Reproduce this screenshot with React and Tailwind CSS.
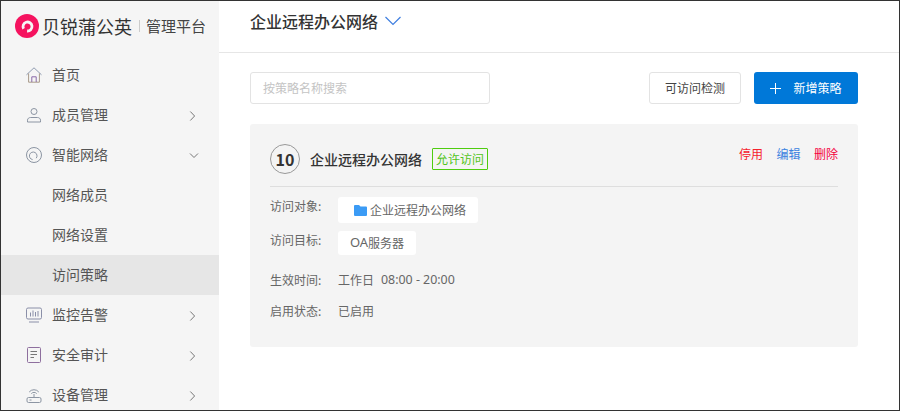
import React from "react";

const Chevron = ({ down }) => (
  <svg width="12" height="12" viewBox="0 0 12 12" fill="none" stroke="#777" strokeWidth="1" className="shrink-0 overflow-visible">
    {down ? <path d="M4 4.5 L8 8.5 L12 4.5" /> : <path d="M4.3 2.5 L8.6 7 L4.3 11.5" />}
  </svg>
);

const icons = {
  home: (
    <svg width="16" height="16" viewBox="0 0 16 16" fill="none" strokeWidth="1">
      <path d="M0.5 7.8 L8 0.8 L15.5 7.8" stroke="#8f9bb0" />
      <path d="M2.6 6.4 V15.2 H13.4 V6.4" stroke="#a89a8a" />
      <path d="M5.8 15 V9.8 H10.2 V15" stroke="#8b6aa8" />
    </svg>
  ),
  user: (
    <svg width="16" height="16" viewBox="0 0 16 16" fill="none" stroke="#8c95a3" strokeWidth="1">
      <circle cx="8" cy="4.5" r="3" />
      <path d="M1.5 15 V13.2 C1.5 11.5 3 10.5 4.6 10.5 H11.4 C13 10.5 14.5 11.5 14.5 13.2 V15 Z" />
    </svg>
  ),
  net: (
    <svg width="16" height="16" viewBox="0 0 16 16" fill="none" stroke="#8c95a3" strokeWidth="1">
      <circle cx="8" cy="8" r="7.5" />
      <path d="M6.6 12.6 A3.8 3.8 0 1 1 10.2 11.2" />
      <circle cx="8" cy="8.8" r="2" stroke="none" />
    </svg>
  ),
  monitor: (
    <svg width="16" height="16" viewBox="0 0 16 16" fill="none" stroke="#8a8fa8" strokeWidth="1">
      <rect x="0.5" y="1" width="15" height="11" rx="1.5" />
      <path d="M3 15 H13" />
      <path d="M4.5 5.5 V9.5 M7 3.5 V9.5 M9.5 5 V9.5 M12 4 V9.5" />
    </svg>
  ),
  audit: (
    <svg width="16" height="16" viewBox="0 0 16 16" fill="none" stroke="#8e6f9e" strokeWidth="1">
      <rect x="1.5" y="0.5" width="13" height="15" rx="1" />
      <path d="M4.5 4.5 H11 M4.5 7.5 H11 M4.5 10.5 H8" stroke="#777" />
    </svg>
  ),
  device: (
    <svg width="16" height="16" viewBox="0 0 16 16" fill="none" stroke="#8c95a3" strokeWidth="1">
      <path d="M3.2 5 A6.2 6.2 0 0 1 12.8 5" />
      <path d="M5.3 6.6 A3.6 3.6 0 0 1 10.7 6.6" />
      <path d="M8 7 V10.5" />
      <rect x="1" y="10.5" width="14" height="5" rx="1.5" />
      <path d="M3.5 13 H5.5" />
    </svg>
  ),
};

const MenuItem = ({ icon, label, chevron, down, active, sub }) => (
  <div className={`flex h-10 shrink-0 items-center pr-[21px] ${active ? "bg-[#e6e6e6]" : ""} ${sub ? "pl-[51px]" : "pl-[25px]"}`}>
    {icon && <span className="mr-[10px] flex h-4 w-4 shrink-0 items-center justify-center">{icons[icon]}</span>}
    <span className="flex-1 pb-[2px] text-[14px] leading-5 text-[#555]">{label}</span>
    {chevron && <Chevron down={down} />}
  </div>
);

const Row = ({ label, children, className, labelClass }) => (
  <div className={`flex ${className}`}>
    <span className={`w-[68px] shrink-0 text-[12px] leading-5 text-[#666] ${labelClass || ""}`}>{label}</span>
    {children}
  </div>
);

export default function App() {
  return (
    <div
      className="flex h-[411px] w-[900px] overflow-hidden border border-[#333] bg-white"
      style={{ fontFamily: '"Noto Sans CJK SC", "Noto Sans", sans-serif' }}
    >
      <aside className="flex w-[218px] shrink-0 flex-col overflow-hidden bg-[#f5f5f5]">
        <div className="flex h-[54px] shrink-0 items-center pb-[5px] pl-[14px]">
          <svg width="24" height="24" viewBox="0 0 24 24" className="mr-[3px] shrink-0">
            <circle cx="12" cy="12" r="12" fill="#f5135f" />
            <path d="M8.6 14.75 A4.5 4.5 0 1 1 12.1 17" fill="none" stroke="#f5f5f5" strokeWidth="2.8" />
          </svg>
          <span className="text-[18px] leading-6 text-[#333]">贝锐蒲公英</span>
          <span className="ml-[7px] mr-[6px] h-[12px] w-px bg-[#ccc]" />
          <span className="text-[15px] leading-6 text-[#444]">管理平台</span>
        </div>
        <MenuItem icon="home" label="首页" />
        <MenuItem icon="user" label="成员管理" chevron />
        <MenuItem icon="net" label="智能网络" chevron down />
        <MenuItem sub label="网络成员" />
        <MenuItem sub label="网络设置" />
        <MenuItem sub active label="访问策略" />
        <MenuItem icon="monitor" label="监控告警" chevron />
        <MenuItem icon="audit" label="安全审计" chevron />
        <MenuItem icon="device" label="设备管理" chevron />
      </aside>

      <main className="flex min-w-0 flex-1 flex-col">
        <header className="flex h-[52px] shrink-0 items-center border-b border-[#e6e6e6] pb-[12px] pl-[31px]">
          <span className="text-[16px] font-medium leading-6 text-[#333]">企业远程办公网络</span>
          <svg width="16" height="10" viewBox="0 0 16 10" fill="none" stroke="#3f7fe0" strokeWidth="1.2" className="ml-[7px]">
            <path d="M0.5 1 L8 8.5 L15.5 1" />
          </svg>
        </header>

        <div className="flex flex-col pl-[31px] pr-[41px] pt-[19px]">
          <div className="flex items-center">
            <div className="flex h-8 w-[240px] items-center rounded-[3px] border border-[#e3e3e3] px-3 text-[12px] text-[#c4c4c4]">
              按策略名称搜索
            </div>
            <div className="flex-1" />
            <button className="h-8 w-[92px] rounded-[3px] border border-[#e3e3e3] bg-white text-[12px] text-[#444]">
              可访问检测
            </button>
            <button className="ml-[13px] flex h-8 w-[104px] items-center justify-center rounded-[3px] bg-[#0078d8] text-[12px] text-white">
              <svg width="11" height="11" viewBox="0 0 11 11" stroke="#fff" strokeWidth="1" className="mr-[12px]">
                <path d="M5.5 0 V11 M0 5.5 H11" />
              </svg>
              新增策略
            </button>
          </div>

          <section className="mt-5 h-[223px] rounded-[3px] bg-[#f4f4f4] px-5 pt-5">
            <div className="flex h-[43px] items-start border-b border-[#dedede]">
              <span className="flex h-[30px] w-[30px] items-center justify-center rounded-full border border-[#999] text-[16px] font-bold text-[#333]">
                10
              </span>
              <span className="ml-[10px] mt-[5px] text-[14px] font-medium leading-5 text-[#333]">企业远程办公网络</span>
              <span className="ml-[10px] mt-1 flex h-[22px] items-center rounded-[1px] border border-[#4fcc0f] px-[3px] text-[12px] text-[#52c41a]">
                允许访问
              </span>
              <div className="flex-1" />
              <div className="flex gap-[13.5px] text-[12px] leading-5">
                <span className="text-[#f5222d]">停用</span>
                <span className="text-[#3b82e0]">编辑</span>
                <span className="text-[#f5003c]">删除</span>
              </div>
            </div>

            <Row label="访问对象:" labelClass="-mt-px" className="mt-[10px]">
              <span className="flex h-[26px] items-center rounded-[3px] bg-white pl-4 pr-3 text-[12px] text-[#666]">
                <svg width="13" height="11" viewBox="0 0 13 11" fill="#3b9bf5" className="mr-[3px]">
                  <path d="M0 1 Q0 0 1 0 H5 L6.5 1.5 H12 Q13 1.5 13 2.5 V10 Q13 11 12 11 H1 Q0 11 0 10 Z" />
                </svg>
                企业远程办公网络
              </span>
            </Row>
            <Row label="访问目标:" labelClass="-mt-px" className="mt-2">
              <span className="flex h-6 w-[78px] items-center justify-center rounded-[3px] bg-white text-[12px] text-[#666]">
                <span className="font-['Noto_Sans'] text-[13px]">OA</span>服务器
              </span>
            </Row>
            <Row label="生效时间:" className="mt-[15px]">
              <span className="text-[12px] leading-5 text-[#666]">工作日</span>
              <span className="ml-[7px] whitespace-pre font-['Noto_Sans'] text-[12.4px] leading-5 text-[#666]">08:00 - 20:00</span>
            </Row>
            <Row label="启用状态:" className="mt-[11px]">
              <span className="text-[12px] leading-5 text-[#666]">已启用</span>
            </Row>
          </section>
        </div>
      </main>
    </div>
  );
}
